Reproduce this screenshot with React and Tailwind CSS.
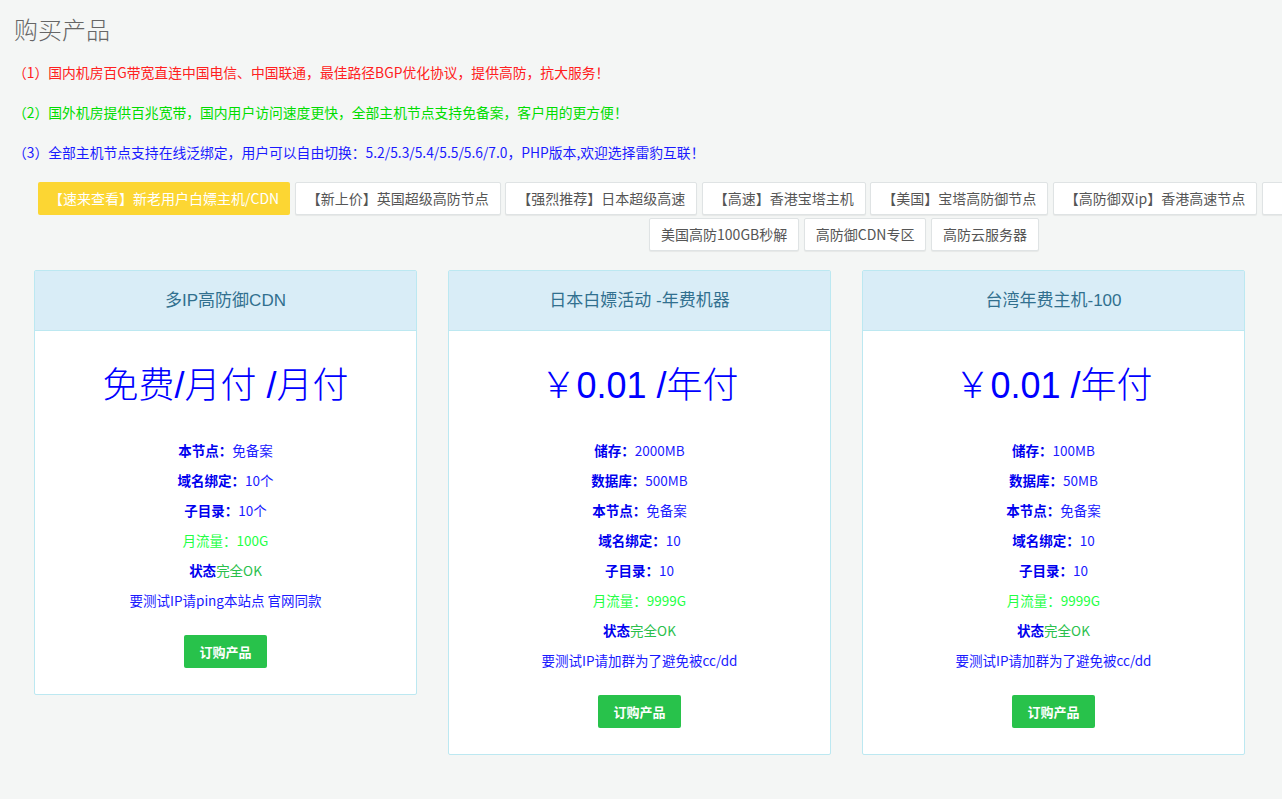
import React from 'react'

const notices = [
    { text: '（1）国内机房百G带宽直连中国电信、中国联通，最佳路径BGP优化协议，提供高防，抗大服务！', color: 'text-[#ff2020]' },
    { text: '（2）国外机房提供百兆宽带，国内用户访问速度更快，全部主机节点支持免备案，客户用的更方便！', color: 'text-[#00dd00]' },
    { text: '（3）全部主机节点支持在线泛绑定，用户可以自由切换：5.2/5.3/5.4/5.5/5.6/7.0，PHP版本,欢迎选择雷豹互联！', color: 'text-[#1a1aff]' },
]

const tabsTop = [
    '【新上价】英国超级高防节点',
    '【强烈推荐】日本超级高速',
    '【高速】香港宝塔主机',
    '【美国】宝塔高防御节点',
    '【高防御双ip】香港高速节点',
    '【特惠】美国高防主机',
]

const tabsBottom = ['美国高防100GB秒解', '高防御CDN专区', '高防云服务器']

const products = [
    {
        name: '多IP高防御CDN',
        price: '免费/月付 /月付',
        rows: [
            { label: '本节点：', value: '免备案' },
            { label: '域名绑定：', value: '10个' },
            { label: '子目录：', value: '10个' },
            { flow: '月流量：100G' },
            { status: true },
            { note: '要测试IP请ping本站点 官网同款' },
        ],
    },
    {
        name: '日本白嫖活动 -年费机器',
        price: '￥0.01 /年付',
        rows: [
            { label: '储存：', value: '2000MB' },
            { label: '数据库：', value: '500MB' },
            { label: '本节点：', value: '免备案' },
            { label: '域名绑定：', value: '10' },
            { label: '子目录：', value: '10' },
            { flow: '月流量：9999G' },
            { status: true },
            { note: '要测试IP请加群为了避免被cc/dd' },
        ],
    },
    {
        name: '台湾年费主机-100',
        price: '￥0.01 /年付',
        rows: [
            { label: '储存：', value: '100MB' },
            { label: '数据库：', value: '50MB' },
            { label: '本节点：', value: '免备案' },
            { label: '域名绑定：', value: '10' },
            { label: '子目录：', value: '10' },
            { flow: '月流量：9999G' },
            { status: true },
            { note: '要测试IP请加群为了避免被cc/dd' },
        ],
    },
]

const Tab = ({ children }) => (
    <div className="h-[33px] shrink-0 px-[11px] flex items-center bg-white border border-[#dfe3e4] rounded-[2px] shadow-[0_1px_1px_rgba(0,0,0,0.06)] text-[14px] text-[#555] whitespace-nowrap">
        {children}
    </div>
)

const Row = ({ row }) => {
    if (row.flow) {
        return <p className="h-[30px] leading-[30px] text-[#22ff44]">{row.flow}</p>
    }
    if (row.status) {
        return (
            <p className="h-[30px] leading-[30px]">
                <b className="text-[#0000ee]">状态</b><span className="text-[#2ac04c]">完全OK</span>
            </p>
        )
    }
    if (row.note) {
        return <p className="h-[30px] leading-[30px] text-[#1a1aff]">{row.note}</p>
    }
    return (
        <p className="h-[30px] leading-[30px]">
            <b className="text-[#0000ee]">{row.label}</b><span className="text-[#1a1aff]">{row.value}</span>
        </p>
    )
}

const ProductCard = ({ product }) => (
    <div className="w-[383px] shrink-0 bg-white border border-[#bce8f1] rounded-[2px]">
        <div className="h-[60px] flex items-center justify-center bg-[#d9edf7] border-b border-[#bce8f1] text-[17px] text-[#31708f] font-['Liberation_Sans','Noto_Sans_CJK_SC',sans-serif]">
            {product.name}
        </div>
        <div className="flex flex-col items-center pt-[35px] pb-[26px]">
            <h2 className="h-[40px] leading-[40px] text-[36px] font-light text-[#0000ff] font-['Liberation_Sans','Noto_Sans_CJK_SC',sans-serif]">
                {product.price}
            </h2>
            <div className="mt-[29px] text-center text-[13.5px]">
                {product.rows.map((row, i) => <Row key={i} row={row} />)}
            </div>
            <button className="mt-[20px] h-[33px] px-[15px] rounded-[2px] bg-[#28c24b] text-white text-[13px] font-bold">
                订购产品
            </button>
        </div>
    </div>
)

export default function App() {
    return (
        <div className="w-full min-h-[799px] overflow-hidden bg-[#f4f6f5] font-['Noto_Sans_CJK_SC',sans-serif]">
            <h1 className="pl-[14px] pt-[13px] text-[24px] leading-[32px] font-light text-[#666]">购买产品</h1>

            <div className="mt-[7px] pl-[13px]">
                {notices.map((n, i) => (
                    <p key={i} className={`h-[40px] leading-[40px] text-[13.8px] ${n.color}`}>{n.text}</p>
                ))}
            </div>

            <div className="mt-[10px] pl-[38px] w-[1650px] flex flex-col gap-[3px]">
                <div className="flex gap-[4.5px]">
                    <div className="h-[33px] shrink-0 px-[11px] flex items-center bg-[#fcd633] rounded-[2px] text-[14px] text-white whitespace-nowrap">
                        【速来查看】新老用户白嫖主机/CDN
                    </div>
                    {tabsTop.map(t => <Tab key={t}>{t}</Tab>)}
                </div>
                <div className="w-[1612px] flex justify-center gap-[4.5px]">
                    {tabsBottom.map(t => <Tab key={t}>{t}</Tab>)}
                </div>
            </div>

            <div className="mt-[19px] pl-[34px] pb-[40px] flex items-start gap-[31px]">
                {products.map(p => <ProductCard key={p.name} product={p} />)}
            </div>
        </div>
    )
}
